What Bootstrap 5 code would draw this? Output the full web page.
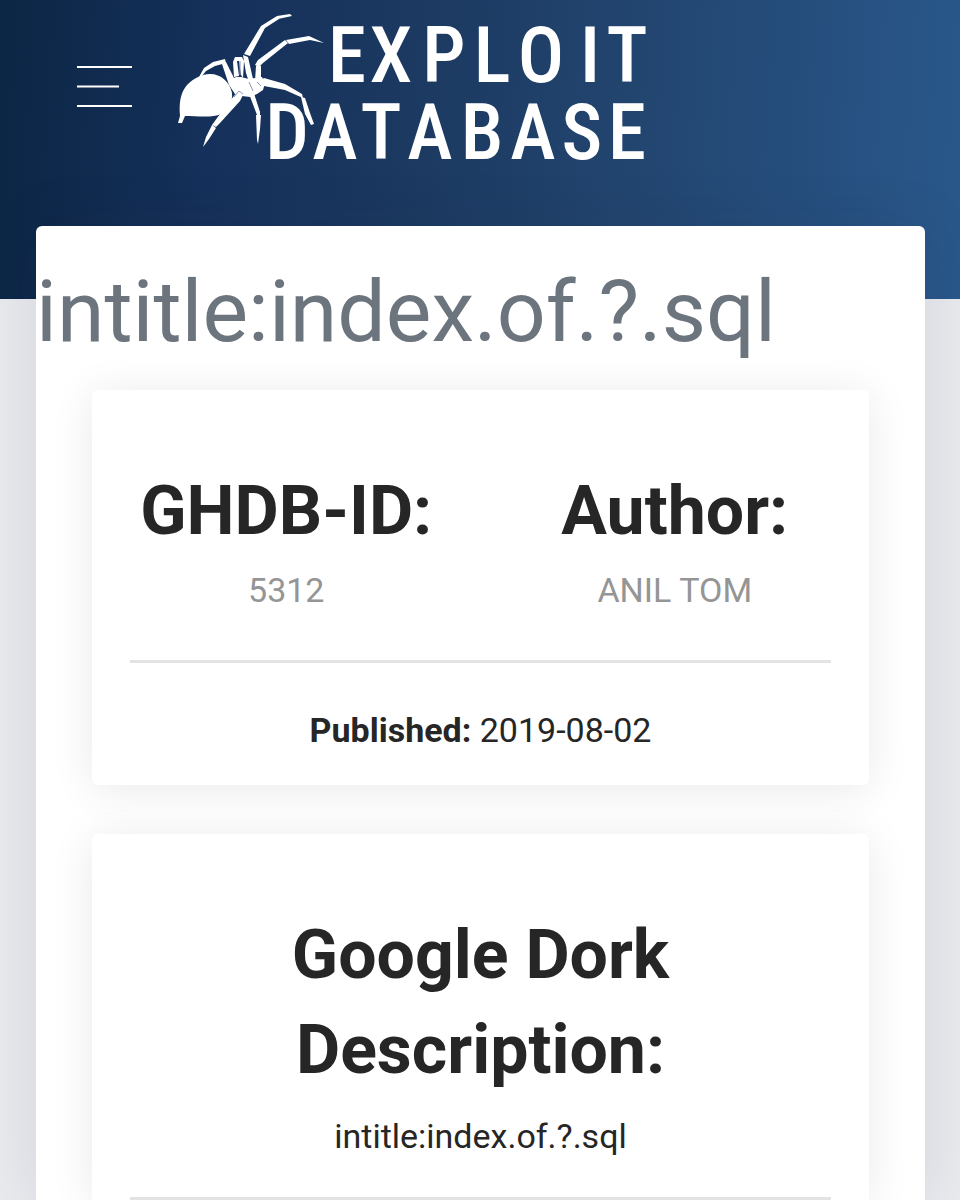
<!DOCTYPE html>
<html lang="en">
<head>
<meta charset="utf-8">
<meta name="viewport" content="width=device-width, initial-scale=1">
<title>intitle:index.of.?.sql - Exploit Database</title>
<link href="https://cdn.jsdelivr.net/npm/bootstrap@5.3.0/dist/css/bootstrap.min.css" rel="stylesheet">
<style>
body { font-family: Roboto, "Liberation Sans", sans-serif; font-size: 34px; line-height: 50px; color: #262626; background: #e9eaee; }
.site-header { height: 299px; padding: 0 36px 0 76px; background: linear-gradient(94deg, #0c2645 0%, #15305a 22%, #1c3a62 45%, #22456f 65%, #275283 90%, #2a588b 100%); }
.menu-btn { width: 56px; height: 44px; margin-top: 64px; margin-right: 44px; }
.brand-logo { width: 480px; height: 180px; display: block; }
.brand-logo text { font-family: "Roboto Condensed", "Liberation Sans Narrow", sans-serif; font-size: 77px; font-weight: 500; fill: #fff; text-anchor: middle; }
.page-main { margin: -73px 35px 0 36px; padding-top: 40px; border-radius: 6px 6px 0 0; box-shadow: 0 0 60px rgba(30, 30, 50, .1); }
.dork-title { font-size: 86px; line-height: 92px; color: #6c757d; margin-bottom: 32px; }
.info-card { margin: 0 56px 49px; padding: 74px 0 30px; border-radius: 6px; box-shadow: 0 4px 44px rgba(0, 0, 0, .09); }
.info-card h2 { font-size: 68px; line-height: 95px; font-weight: 700; }
.stat-value { color: #959595; margin-top: 6px; }
.rule { margin: 45px 38px 42px; border-top: 3px solid #e3e3e3; opacity: 1; }
.dork-card { padding-bottom: 0; margin-bottom: 0; border-radius: 6px 6px 0 0; }
.dork-card h2 { padding: 0 38px; margin-bottom: 13px; }
.dork-card .rule { margin: 36px 38px 0; }
</style>
</head>
<body>
<div class="min-vh-100 overflow-hidden">
<header class="site-header d-flex align-items-start">
  <button type="button" class="menu-btn btn p-0 border-0" aria-label="Menu">
    <svg class="d-block" width="56" height="44" fill="none" stroke="#fff" stroke-width="2"><path d="M1 3h55M1 22.500h42M1 42h55"/></svg>
  </button>
  <a href="#" aria-label="Exploit Database">
    <svg class="brand-logo" viewBox="176 0 480 180">
      <g fill="#fff">
        <!-- abdomen -->
        <path d="M178 123l2-7c-1-12 0-23 7-31 7-7 15-11 23-11 11 0 20 8 22 19 1 9-4 17-11 21-8 4-24 2-36 2l-3 7z"/>
        <!-- thorax and head -->
        <path d="M222 64l4-2 8 16 2-1 5 0 8 2 6-1 7-1 3 6-2 7-6 4-7 3-8-1-7-2-6-9z"/>
        <!-- rear legs -->
        <path d="M199 77l5-9 9-6 12-3 1 4-11 3-9 5-5 6zM233 62l2-5 7 0 2 4-1 17-2-3-2-14-2 0 2 15-5 1z"/>
        <!-- upper legs -->
        <path d="M243 55l5 2 5 22-4 3-3-9zM244 54l17-28 4 2-15 28zM261 26l16-10 2 3-14 9zM277 16l13-2 2 2-14 3z"/>
        <path d="M256 66l5 0 0 14-6 1zM255 65l3-5 27-20 3 3-25 20-4 4zM286 40l23-4 1 4-21 4zM309 36l15 7-14-3z"/>
        <!-- lower legs -->
        <path d="M260 81l4-3 21 6 17 10 1 4-18-8-21-4zM301 97l4 1 5 15 4 11-3 1-6-11z"/>
        <path d="M246 80l4 1 10 31 0 4-3-1-11-29zM256 115h5l-1 14-2 15-1-4z"/>
        <path d="M238 91l5 4-3 6-20 22-4 4-4-2 13-18zM212 125l4 3-7 11-6 8 3-10z"/>
      </g>
      <path fill="none" stroke="#8a98b4" stroke-width="1" d="M234 97l5-6M239 91l4 3M249 82l4 9M257 82l4 4M240 61v14"/>
      <text x="347 391 444 492 541 590 627" y="82">EXPLOIT</text>
      <text x="287 335 381 430 482 533 582 627" y="159">DATABASE</text>
    </svg>
  </a>
</header>
<main class="page-main bg-white">
  <h1 class="dork-title fw-normal">intitle:index.of.?.sql</h1>
  <section class="info-card bg-white text-center">
    <div class="row g-0">
      <div class="col-6"><h2 class="mb-0">GHDB-ID:</h2><p class="stat-value mb-0">5312</p></div>
      <div class="col-6"><h2 class="mb-0">Author:</h2><p class="stat-value mb-0">ANIL TOM</p></div>
    </div>
    <hr class="rule">
    <p class="mb-0"><strong>Published:</strong> 2019-08-02</p>
  </section>
  <section class="info-card dork-card bg-white text-center">
    <h2>Google Dork Description:</h2>
    <p class="mb-0">intitle:index.of.?.sql</p>
    <hr class="rule">
  </section>
</main>
</div>
<script src="https://cdn.jsdelivr.net/npm/bootstrap@5.3.0/dist/js/bootstrap.bundle.min.js"></script>
</body>
</html>
